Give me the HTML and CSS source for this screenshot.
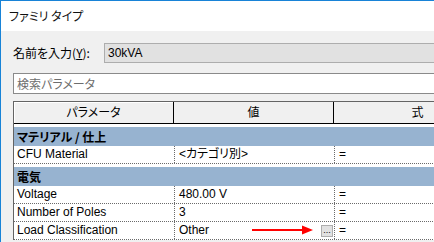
FILE: index.html
```html
<!DOCTYPE html>
<html lang="ja">
<head>
<meta charset="utf-8">
<link rel="stylesheet" href="styles.css">
</head>
<body>
<div class="window">
  <div class="titlebar">ファミリ タイプ</div>
  <div class="content">
    <div class="name-row">
      <label class="name-label">名前を入力(<u>Y</u>):</label>
      <div class="combo">30kVA</div>
    </div>
    <div class="search">検索パラメータ</div>
    <div class="table">
      <div class="row header">
        <div class="cell hcell first">パラメータ</div>
        <div class="cell hcell">値</div>
        <div class="cell hcell">式</div>
      </div>
      <div class="group"><span>マテリアル / 仕上</span></div>
      <div class="row data">
        <div class="cell">CFU Material</div>
        <div class="cell val">&lt;カテゴリ別&gt;</div>
        <div class="cell val">=</div>
      </div>
      <div class="group"><span>電気</span></div>
      <div class="row data">
        <div class="cell">Voltage</div>
        <div class="cell val">480.00 V</div>
        <div class="cell val">=</div>
      </div>
      <div class="row data">
        <div class="cell">Number of Poles</div>
        <div class="cell val">3</div>
        <div class="cell val">=</div>
      </div>
      <div class="row data">
        <div class="cell">Load Classification</div>
        <div class="cell val withbtn">
          <span>Other</span>
          <svg class="arrow" width="62" height="10" viewBox="0 0 62 10">
            <line x1="0" y1="5" x2="52" y2="5" stroke="#ff0000" stroke-width="2"/>
            <polygon points="50,0.5 61,5 50,9.5" fill="#ff0000"/>
          </svg>
          <span class="dots">...</span>
        </div>
        <div class="cell val">=</div>
      </div>
    </div>
  </div>
</div>
</body>
</html>
```
FILE: styles.css
```css
html, body {
  margin: 0;
  padding: 0;
  width: 434px;
  height: 242px;
  overflow: hidden;
  background: #f0f0f0;
}
body {
  font-family: "Liberation Sans", "Noto Sans CJK JP", sans-serif;
  font-size: 12px;
  color: #000;
  font-feature-settings: "palt";
}
.window {
  height: 241px;
  border-top: 1px solid #1883d7;
  border-left: 1px solid #1883d7;
  background: #f0f0f0;
  overflow: hidden;
}
.titlebar {
  height: 30px;
  line-height: 30px;
  background: #ffffff;
  padding-left: 8px;
  font-family: "Noto Sans CJK JP", sans-serif;
  font-size: 12px;
  color: #111;
}
.content {
  padding: 12px 0 0 12px;
  width: 560px;
}
.name-row {
  display: flex;
  align-items: center;
  height: 20px;
}
.name-label {
  width: 91px;
  font-family: "Noto Sans CJK JP", sans-serif;
  font-size: 12px;
  line-height: 20px;
}
.name-label u {
  text-decoration: underline;
}
.combo {
  flex: 1;
  height: 18px;
  line-height: 18px;
  border: 1px solid #adadad;
  background: #e1e1e1;
  padding-left: 3px;
}
.search {
  margin-top: 10px;
  height: 19px;
  line-height: 19px;
  border: 1px solid #8a8a8a;
  background: #ffffff;
  padding-left: 3px;
  color: #6d6d6d;
  font-family: "Noto Sans CJK JP", sans-serif;
}
.table {
  margin-top: 7px;
  border-top: 1px solid #646464;
  border-left: 1px solid #646464;
  background: #ffffff;
}
.row {
  display: grid;
  grid-template-columns: 160px 160px 168px;
}
.header {
  height: 21px;
  border-bottom: 1px solid #000;
  background: #f0f0f0;
}
.hcell {
  text-align: center;
  line-height: 20px;
  border-right: 1px solid #000;
  font-family: "Noto Sans CJK JP", sans-serif;
}
.hcell.first {
  box-shadow: inset 1px 1px 0 #ffffff;
}
.group {
  border-top: 3px solid #ffffff;
  height: 19px;
  line-height: 19px;
  background: #97b3d0;
  padding-left: 3px;
  font-weight: bold;
  font-family: "Noto Sans CJK JP", sans-serif;
}
.data {
  height: 17px;
  border-bottom: 1px dotted #6a6a6a;
}
.data .cell {
  line-height: 17px;
  padding-left: 3px;
  white-space: nowrap;
}
.data .val {
  border-left: 1px dotted #6a6a6a;
  padding-left: 4px;
}
.withbtn {
  position: relative;
  display: flex;
  align-items: center;
}
.dots {
  margin-left: auto;
  margin-right: 1px;
  width: 10px;
  height: 10px;
  border: 1px solid #adadad;
  background: #e1e1e1;
  font-size: 9px;
  line-height: 8px;
  text-align: center;
}
.arrow {
  position: absolute;
  left: 77px;
  top: 3px;
}
```
